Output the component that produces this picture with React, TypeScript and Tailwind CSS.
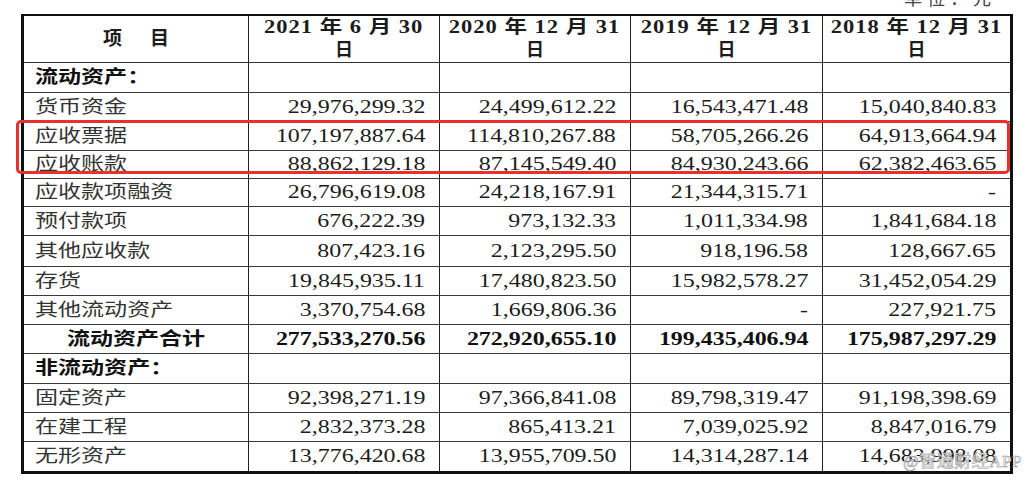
const font = "font-['Liberation_Serif','Noto_Sans_CJK_SC',serif]";

type Row = {
  label: string;
  values: string[];
  h: string;
  kind?: "section" | "total";
};

const rows: Row[] = [
  { label: "流动资产：", values: ["", "", "", ""], h: "h-[30px]", kind: "section" },
  { label: "货币资金", values: ["29,976,299.32", "24,499,612.22", "16,543,471.48", "15,040,840.83"], h: "h-[29px]" },
  { label: "应收票据", values: ["107,197,887.64", "114,810,267.88", "58,705,266.26", "64,913,664.94"], h: "h-[29px]" },
  { label: "应收账款", values: ["88,862,129.18", "87,145,549.40", "84,930,243.66", "62,382,463.65"], h: "h-[28px]" },
  { label: "应收款项融资", values: ["26,796,619.08", "24,218,167.91", "21,344,315.71", "-"], h: "h-[28px]" },
  { label: "预付款项", values: ["676,222.39", "973,132.33", "1,011,334.98", "1,841,684.18"], h: "h-[29px]" },
  { label: "其他应收款", values: ["807,423.16", "2,123,295.50", "918,196.58", "128,667.65"], h: "h-[31px]" },
  { label: "存货", values: ["19,845,935.11", "17,480,823.50", "15,982,578.27", "31,452,054.29"], h: "h-[29px]" },
  { label: "其他流动资产", values: ["3,370,754.68", "1,669,806.36", "-", "227,921.75"], h: "h-[29px]" },
  { label: "流动资产合计", values: ["277,533,270.56", "272,920,655.10", "199,435,406.94", "175,987,297.29"], h: "h-[29px]", kind: "total" },
  { label: "非流动资产：", values: ["", "", "", ""], h: "h-[30px]", kind: "section" },
  { label: "固定资产", values: ["92,398,271.19", "97,366,841.08", "89,798,319.47", "91,198,398.69"], h: "h-[29px]" },
  { label: "在建工程", values: ["2,832,373.28", "865,413.21", "7,039,025.92", "8,847,016.79"], h: "h-[29px]" },
  { label: "无形资产", values: ["13,776,420.68", "13,955,709.50", "14,314,287.14", "14,683,998.08"], h: "h-[29px]" },
];

const headers = [
  "2021 年 6 月 30",
  "2020 年 12 月 31",
  "2019 年 12 月 31",
  "2018 年 12 月 31",
];

const grid = "grid grid-cols-[225px_191px_191px_192px_187px]";

export default function App() {
  return (
    <div className={`relative h-[481px] w-[1030px] overflow-hidden bg-white ${font} text-[#1c1c1c]`}>
      {/* unit label, cut off by the top edge */}
      <div className="h-[14px] overflow-hidden">
        <p className="-mt-[10px] pr-[34px] text-right text-[18px] leading-[18px] tracking-[5px] text-[#444]">
          单位：元
        </p>
      </div>

      <div className="ml-[21px] w-[992px] border-t-2 border-r-[3px] border-b-[3px] border-l-[3px] border-[#111]">
        {/* header */}
        <div className={`${grid} h-[47px] border-b border-[#333]`}>
          <div className="flex items-center justify-center gap-[28px] border-r border-[#222] text-[19px] font-bold">
            <span>项</span>
            <span>目</span>
          </div>
          {headers.map((h, i) => (
            <div
              key={h}
              className={`flex flex-col items-center justify-center text-[18px] leading-[23px] font-bold ${
                i < 3 ? "border-r border-[#222]" : ""
              }`}
            >
              <span className="inline-block scale-x-[1.25] whitespace-pre tracking-[0.8px]">{h}</span>
              <span>日</span>
            </div>
          ))}
        </div>

        {rows.map((r, ri) => (
          <div
            key={r.label}
            className={`${grid} ${r.h} ${ri < rows.length - 1 ? "border-b border-[#3a3a3a]" : ""}`}
          >
            <div
              className={`flex items-center border-r border-[#222] text-[18px] ${
                r.kind === "total"
                  ? "justify-center font-bold text-[#111]"
                  : r.kind === "section"
                    ? "pl-[11px] font-bold text-[#111]"
                    : "pl-[11px] text-[#333]"
              }`}
            >
              <span
                className={`inline-block scale-x-[1.28] ${
                  r.kind === "total" ? "origin-center" : "origin-left"
                } ${r.kind === "section" ? "scale-x-[1.2]" : ""}`}
              >
                {r.label}
              </span>
            </div>
            {r.values.map((v, vi) => (
              <div
                key={vi}
                className={`flex items-center justify-end pr-[14px] text-[18px] ${
                  r.kind === "total" ? "font-bold text-[#111]" : ""
                } ${vi < 3 ? "border-r border-[#222]" : ""}`}
              >
                <span className="inline-block origin-right scale-x-[1.33]">{v}</span>
              </div>
            ))}
          </div>
        ))}
      </div>

      {/* red highlight over 应收票据 / 应收账款 */}
      <div className="pointer-events-none absolute top-[120px] left-[16px] h-[54px] w-[994px] rounded-[5px] border-[3px] border-[#e8302c]" />

      {/* watermark */}
      <div className="pointer-events-none absolute top-[449px] left-[903px] text-[17px] tracking-[0.5px] text-white/90 [-webkit-text-stroke:0.6px_#9a9a9a]">
        @智通财经APP
      </div>
    </div>
  );
}
